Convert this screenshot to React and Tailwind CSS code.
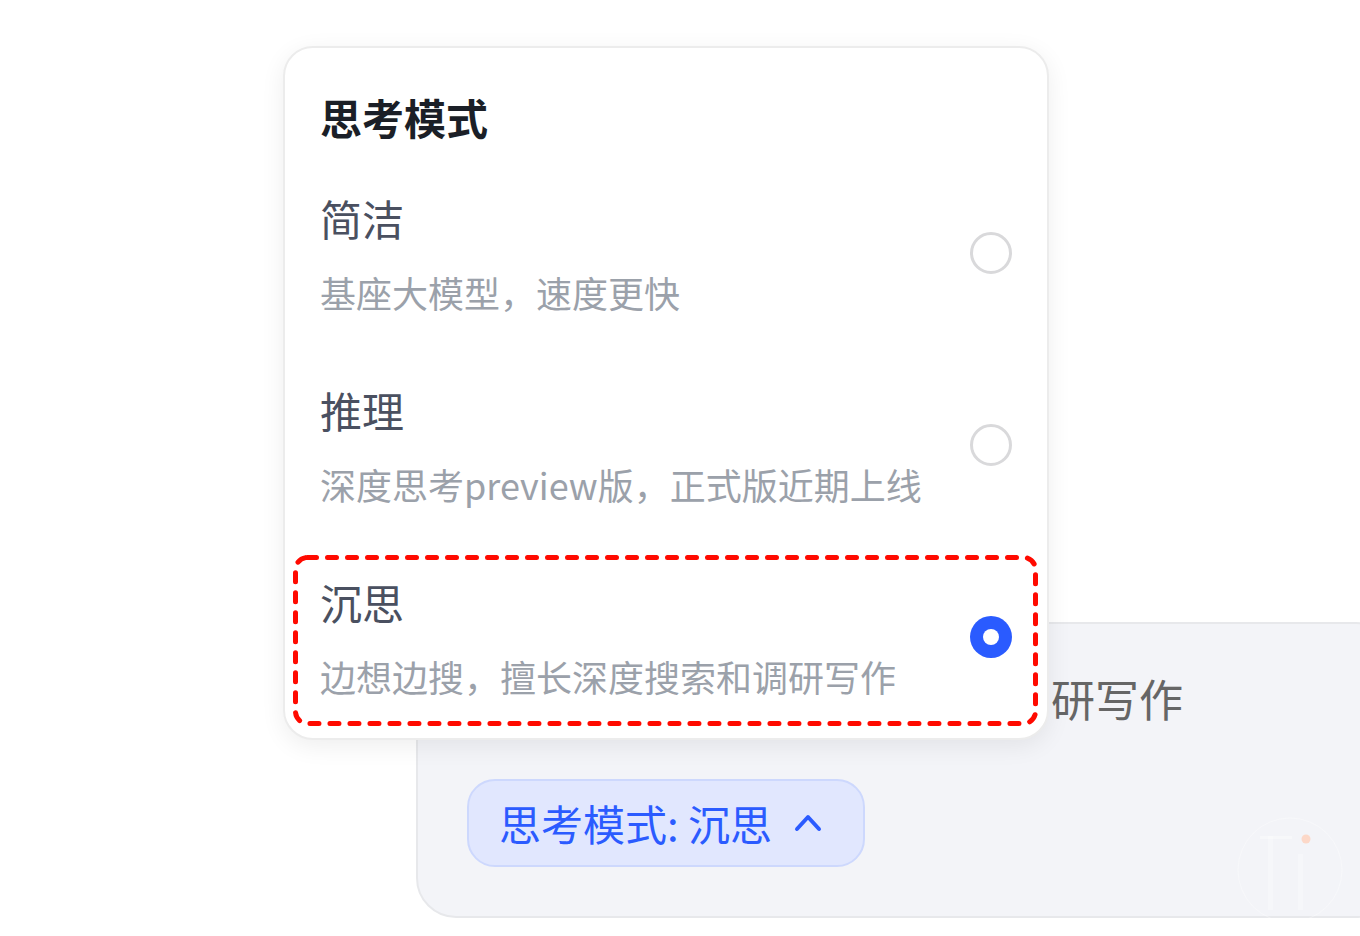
import React from "react";

const FONT = { fontFamily: '"Noto Sans CJK SC", "Noto Sans", sans-serif' };

function Radio({ checked }) {
  if (checked) {
    return (
      <div className="w-[42px] h-[42px] rounded-full bg-[#2a5bff] flex items-center justify-center shrink-0">
        <div className="w-[16px] h-[16px] rounded-full bg-white" />
      </div>
    );
  }
  return <div className="w-[42px] h-[42px] rounded-full border-[3px] border-[#d9d9db] shrink-0" />;
}

function Item({ title, desc, checked, children }) {
  return (
    <div className="relative flex items-center justify-between pt-[38px] pb-[39px]">
      <div className="flex flex-col">
        <div className="text-[42px] leading-none text-[#4a5060] mt-[2px]">{title}</div>
        <div className="mt-[35px] text-[36px] leading-none text-[#9ba1aa] whitespace-nowrap">{desc}</div>
      </div>
      <Radio checked={checked} />
      {children}
    </div>
  );
}

export default function App() {
  return (
    <div className="relative w-[1360px] h-[936px] overflow-hidden bg-white" style={FONT}>
      {/* underlying card */}
      <div className="pl-[416px] pt-[622px]">
        <div className="w-[980px] h-[296px] rounded-[40px] border-2 border-[#e7e8eb] bg-[#f3f4f8] flex flex-col">
          <div className="pl-[633px] pt-[52px] text-[44px] leading-none text-[#666666] whitespace-nowrap">研写作</div>
          <div className="pl-[49px] mt-[59px]">
            <div className="w-[398px] h-[88px] rounded-[28px] border-2 border-[#cdd8fd] bg-[#e1e7fe] flex items-center pl-[30px] gap-[22px]">
              <span className="text-[42px] leading-none text-[#2b5bff] whitespace-nowrap">思考模式: 沉思</span>
              <svg width="28" height="20" viewBox="0 0 28 20" fill="none">
                <polyline points="3,16 14,4 25,16" stroke="#2b5bff" strokeWidth="4" strokeLinecap="round" strokeLinejoin="round" />
              </svg>
            </div>
          </div>
          {/* faint logo */}
          <div className="absolute left-[1236px] top-[814px]">
            <svg width="110" height="110" viewBox="0 0 110 110" fill="none">
              <circle cx="54" cy="56" r="52" stroke="#ffffff" strokeWidth="1" opacity="0.35" />
              <rect x="24" y="22" width="32" height="3" fill="#ffffff" opacity="0.35" />
              <rect x="32" y="22" width="5" height="74" fill="#ffffff" opacity="0.25" />
              <rect x="62" y="40" width="5" height="56" fill="#ffffff" opacity="0.25" />
              <circle cx="70" cy="25" r="4.5" fill="#fcd8c8" />
            </svg>
          </div>
        </div>
      </div>

      {/* popup */}
      <div className="absolute left-[283px] top-[46px] w-[766px] h-[694px] rounded-[30px] border-2 border-[#ececec] bg-white shadow-[0_6px_24px_rgba(0,0,0,0.07)] pt-[48px] pl-[35px] pr-[35px]">
        <div className="text-[42px] leading-none font-bold text-[#1b1f27] mb-[19px]">思考模式</div>
        <Item title="简洁" desc="基座大模型，速度更快" />
        <Item title="推理" desc="深度思考preview版，正式版近期上线" />
        <Item title="沉思" desc="边想边搜，擅长深度搜索和调研写作" checked>
          <svg className="absolute left-[-27px] top-[14px]" width="745" height="171" viewBox="0 0 745 171" fill="none">
            <rect x="2.5" y="2.5" width="740" height="166" rx="12" stroke="#ff0a00" strokeWidth="5" strokeDasharray="9 11" strokeLinecap="round" />
          </svg>
        </Item>
      </div>
    </div>
  );
}
